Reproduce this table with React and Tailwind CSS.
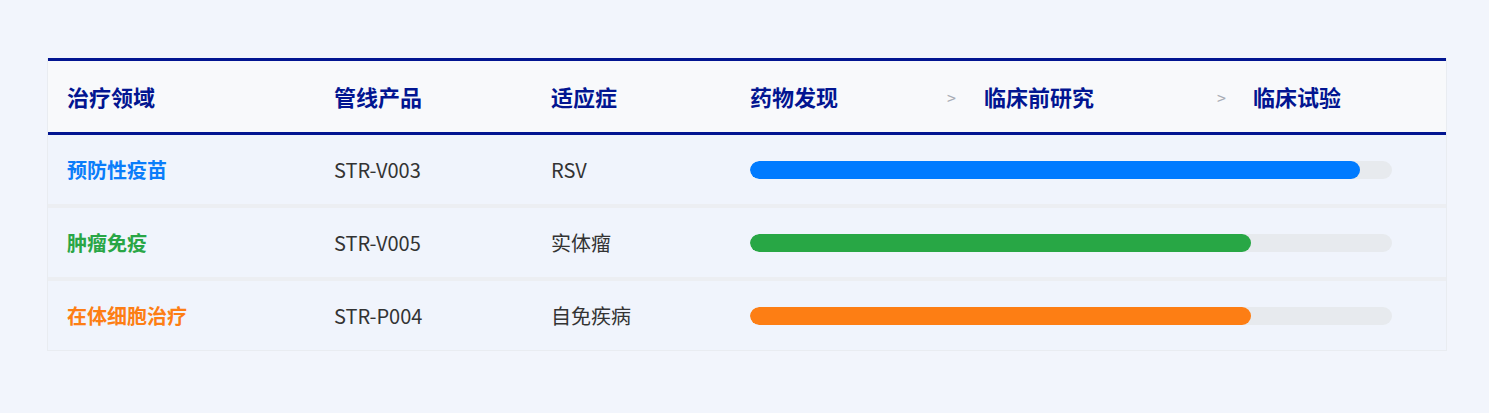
import React from "react";

const rows = [
  { area: "预防性疫苗", color: "text-[#0b7dfa]", product: "STR-V003", indication: "RSV", bar: "bg-[#007bff]", fill: "w-[610px]" },
  { area: "肿瘤免疫", color: "text-[#29a646]", product: "STR-V005", indication: "实体瘤", bar: "bg-[#28a745]", fill: "w-[501px]" },
  { area: "在体细胞治疗", color: "text-[#fd7e14]", product: "STR-P004", indication: "自免疾病", bar: "bg-[#fd7e14]", fill: "w-[501px]" },
];

export default function App() {
  return (
    <div
      className="min-h-[413px] w-full bg-[#f2f5fc] pt-[58px]"
      style={{ fontFamily: '"Noto Sans CJK SC", "Noto Sans", sans-serif' }}
    >
      <div className="ml-[47px] w-[1400px] border-x border-[#e9ecf1]">
        {/* header */}
        <div className="flex h-[77px] items-center border-y-[3px] border-[#021591] bg-[#f8f9fb] text-[22px] font-bold text-[#021591]">
          <div className="w-[268px] pl-[19px]">治疗领域</div>
          <div className="w-[216px] pl-[18px]">管线产品</div>
          <div className="w-[199px] pl-[19px]">适应症</div>
          <div className="flex flex-1 items-center pl-[19px]">
            <span className="w-[197px]">药物发现</span>
            <span className="w-[37px] text-[16px] font-normal text-[#a9adb5]">&gt;</span>
            <span className="w-[233px]">临床前研究</span>
            <span className="w-[36px] text-[16px] font-normal text-[#a9adb5]">&gt;</span>
            <span>临床试验</span>
          </div>
        </div>

        {/* body */}
        <div className="flex flex-col">
          {rows.map((r, i) => (
            <div key={r.product}>
              {i > 0 && <div className="h-[4px] bg-[#eceef2]" />}
              <div className="flex h-[69px] items-center bg-[#f0f4fc] text-[20px] text-[#333333]">
                <div className={`w-[268px] pl-[19px] font-semibold ${r.color}`}>{r.area}</div>
                <div className="w-[216px] pl-[18px]">{r.product}</div>
                <div className="w-[199px] pl-[19px]">{r.indication}</div>
                <div className="flex-1 pl-[19px]">
                  <div className="h-[18px] w-[642px] overflow-hidden rounded-full bg-[#e7eaee]">
                    <div className={`h-full rounded-full ${r.bar} ${r.fill}`} />
                  </div>
                </div>
              </div>
            </div>
          ))}
          <div className="h-px bg-[#e9ecf1]" />
        </div>
      </div>
    </div>
  );
}
